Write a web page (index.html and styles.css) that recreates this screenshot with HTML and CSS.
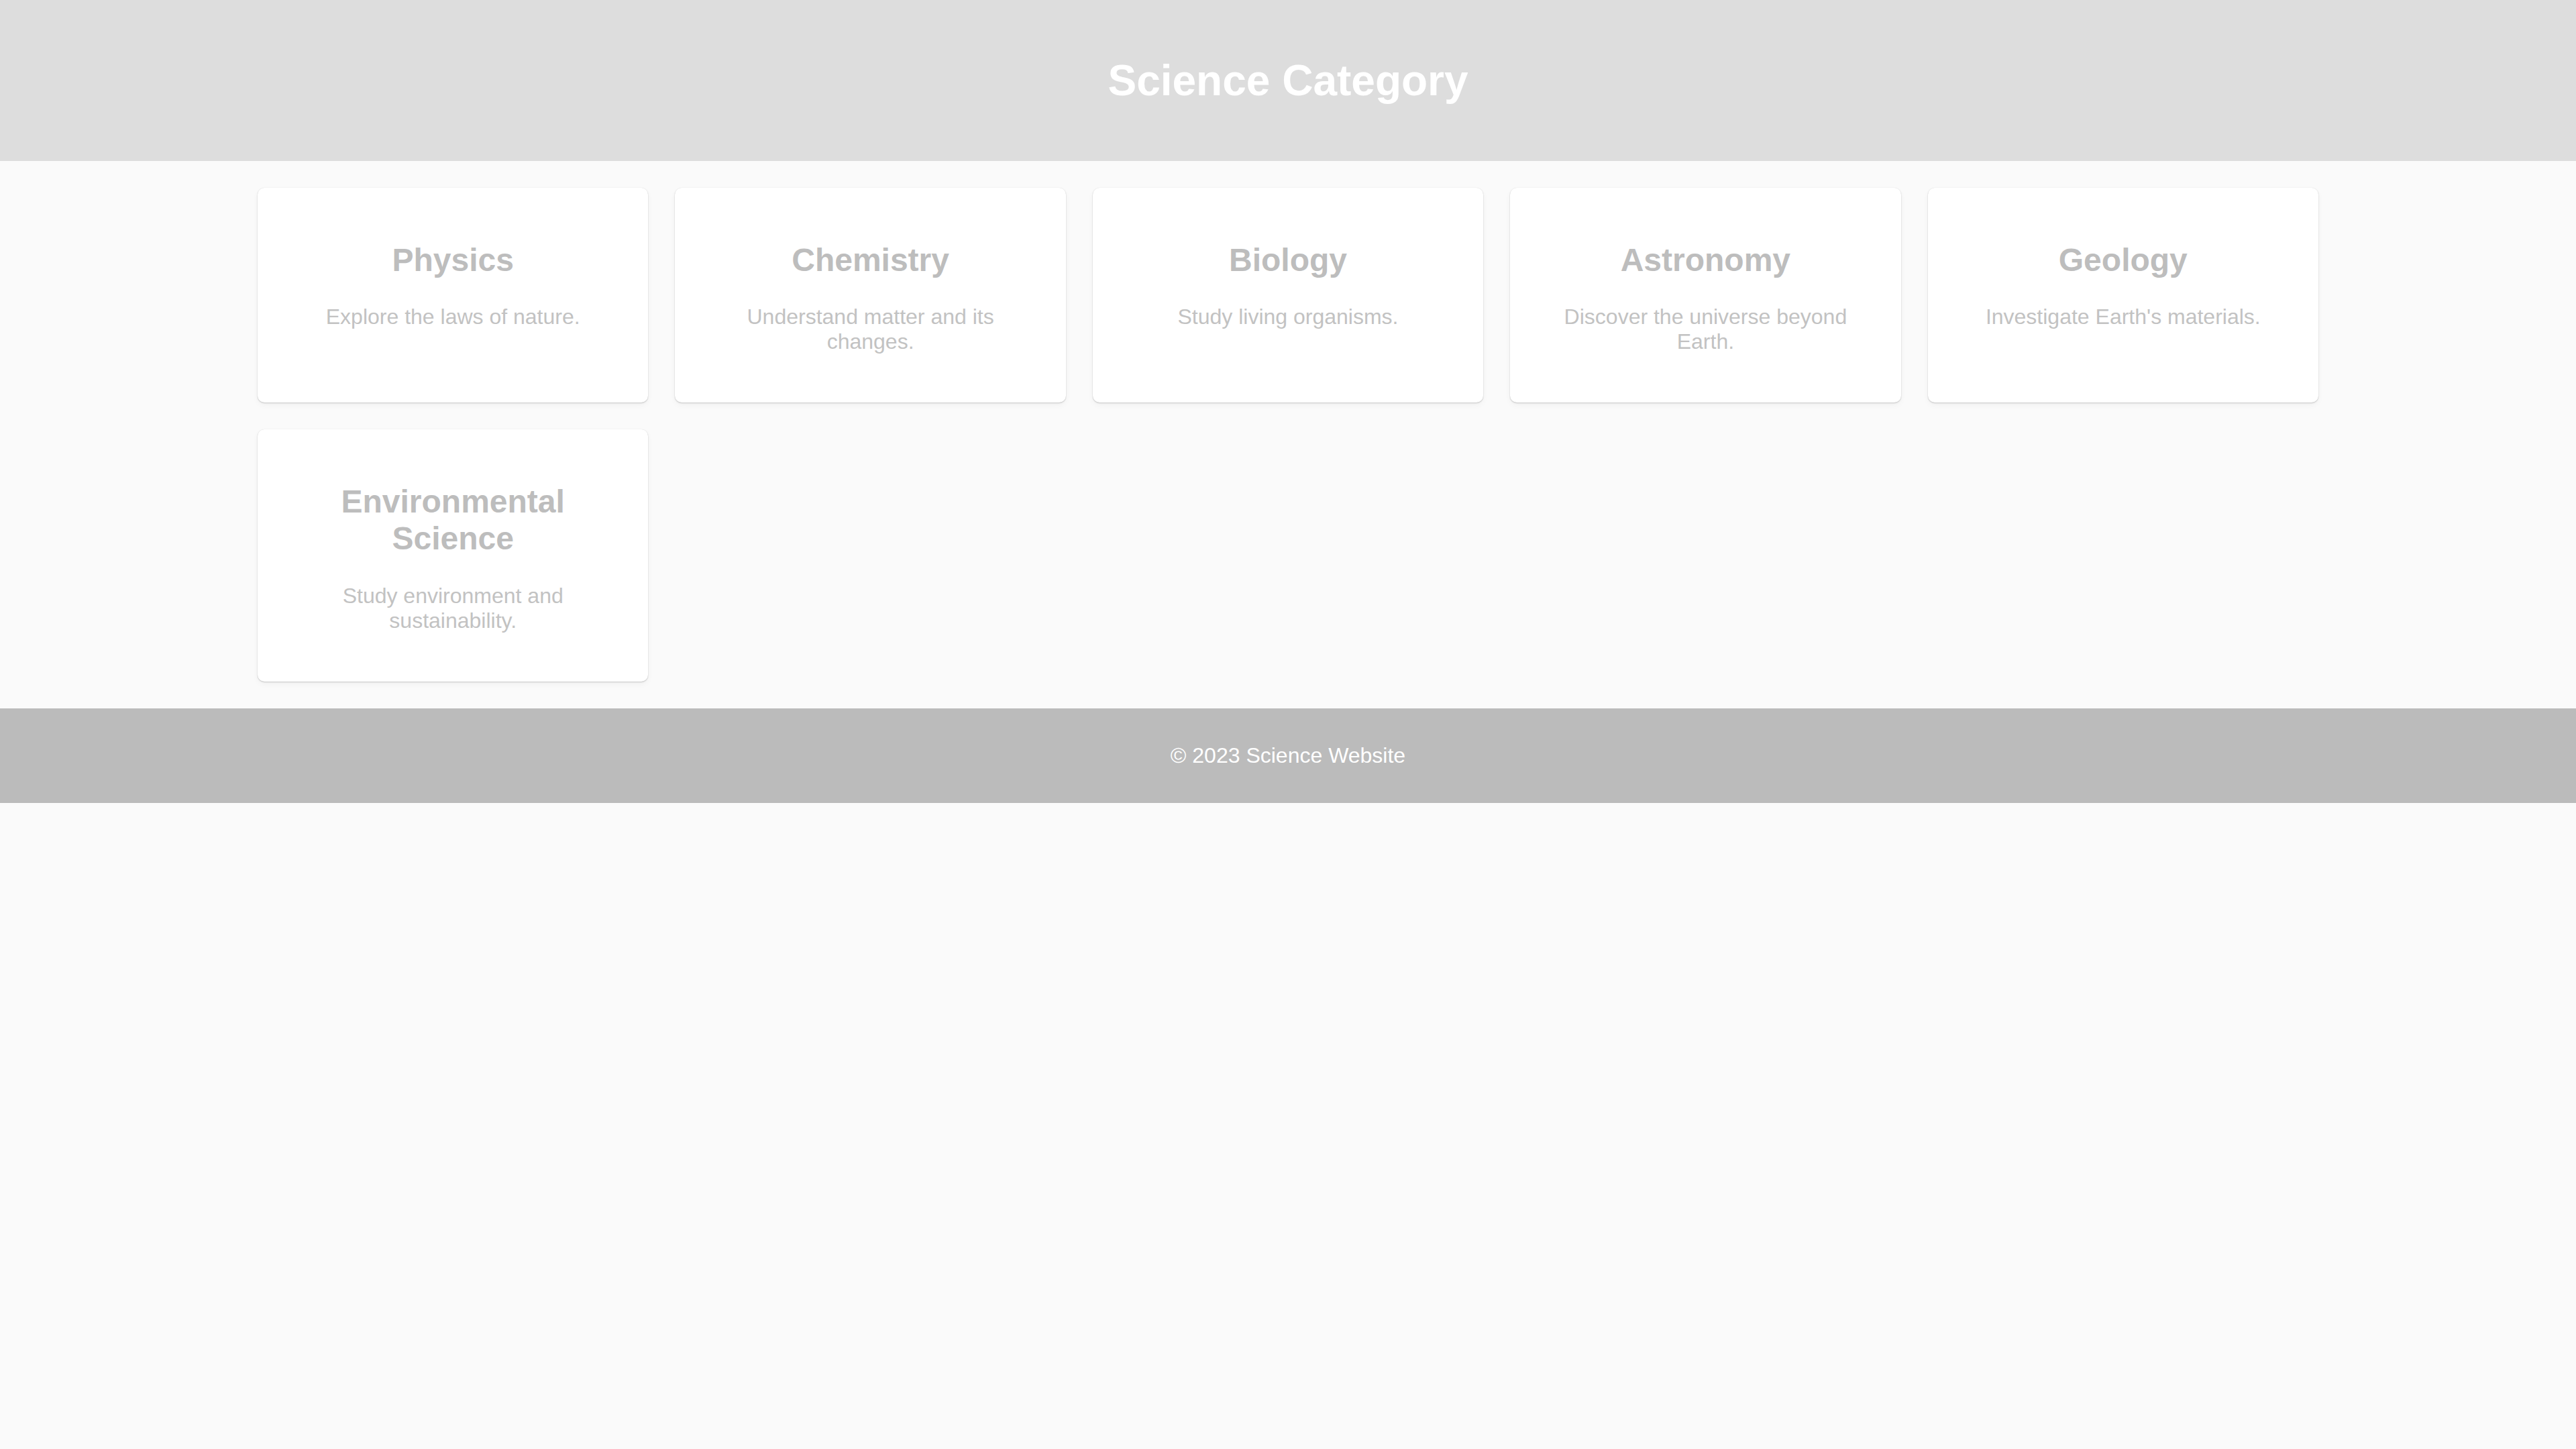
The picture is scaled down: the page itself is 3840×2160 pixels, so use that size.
FILE: index.html
```html
<!DOCTYPE html>
<html lang="en">
<head>
<meta charset="utf-8">
<title>Science Category</title>
<link rel="stylesheet" href="styles.css">
</head>
<body>
<header class="site-header">
  <h1 class="site-title">Science Category</h1>
</header>
<main class="category-grid">
  <div class="card"><h2 class="card-title">Physics</h2><p class="card-text">Explore the laws of nature.</p></div>
  <div class="card"><h2 class="card-title">Chemistry</h2><p class="card-text">Understand matter and its changes.</p></div>
  <div class="card"><h2 class="card-title">Biology</h2><p class="card-text">Study living organisms.</p></div>
  <div class="card"><h2 class="card-title">Astronomy</h2><p class="card-text">Discover the universe beyond Earth.</p></div>
  <div class="card"><h2 class="card-title">Geology</h2><p class="card-text">Investigate Earth's materials.</p></div>
  <div class="card"><h2 class="card-title">Environmental Science</h2><p class="card-text">Study environment and sustainability.</p></div>
</main>
<footer class="site-footer">
  <p class="footer-text">&copy; 2023 Science Website</p>
</footer>
</body>
</html>
```
FILE: styles.css
```css
html, body {
  margin: 0;
  padding: 0;
}
body {
  background: #fafafa;
  font-family: "Liberation Sans", Arial, sans-serif;
  font-size: 32px;
}
.site-header {
  background: #dddddd;
  padding: 40px;
  text-align: center;
}
.site-title {
  margin: 42.88px 0;
  font-size: 64px;
  font-weight: bold;
  color: #ffffff;
}
.category-grid {
  width: 80%;
  margin: 0 auto;
  padding: 40px 0;
  display: grid;
  grid-template-columns: repeat(5, 1fr);
  gap: 40px;
}
.card {
  background: #ffffff;
  border-radius: 10px;
  padding: 40px;
  text-align: center;
  box-shadow: 0 1px 2px rgba(0, 0, 0, 0.18), 0 0 1px rgba(0, 0, 0, 0.12), 0 4px 10px rgba(0, 0, 0, 0.04);
}
.card-title {
  margin: 39.84px 0;
  font-size: 48px;
  font-weight: bold;
  color: #bdbdbd;
}
.card-text {
  margin: 32px 0;
  font-size: 32px;
  color: #c2c2c2;
}
.site-footer {
  background: #bbbbbb;
  padding: 20px;
  text-align: center;
}
.footer-text {
  margin: 32px 0;
  color: #ffffff;
  font-size: 32px;
}
```
